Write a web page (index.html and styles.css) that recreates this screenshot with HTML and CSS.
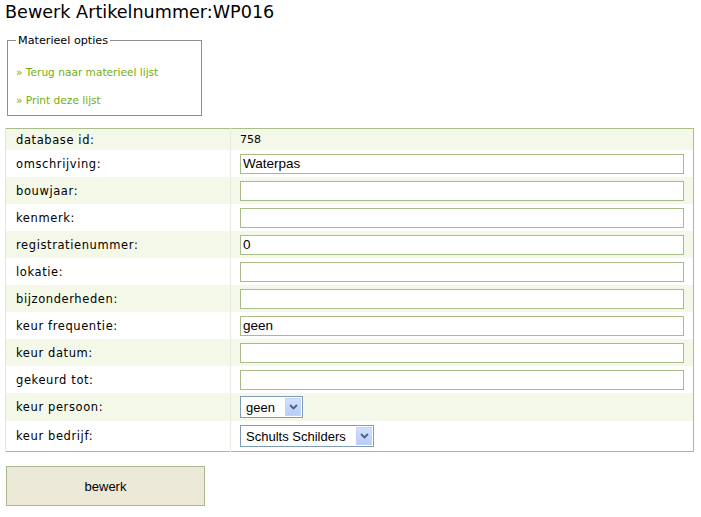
FILE: index.html
```html
<!DOCTYPE html>
<html lang="nl">
<head>
<meta charset="utf-8">
<title>Bewerk Artikelnummer:WP016</title>
<link rel="stylesheet" href="styles.css">
</head>
<body>
<h1 class="title">Bewerk Artikelnummer:WP016</h1>
<fieldset class="options">
  <legend>Materieel opties</legend>
  <p class="opt"><a href="#">» Terug naar materieel lijst</a></p>
  <p class="opt"><a href="#">» Print deze lijst</a></p>
</fieldset>
<form class="form">
<table class="grid">
  <tr class="alt short"><td class="lbl">database id:</td><td class="val">758</td></tr>
  <tr><td class="lbl">omschrijving:</td><td class="val"><input class="txt" type="text" value="Waterpas"></td></tr>
  <tr class="alt"><td class="lbl">bouwjaar:</td><td class="val"><input class="txt" type="text" value=""></td></tr>
  <tr><td class="lbl">kenmerk:</td><td class="val"><input class="txt" type="text" value=""></td></tr>
  <tr class="alt"><td class="lbl">registratienummer:</td><td class="val"><input class="txt" type="text" value="0"></td></tr>
  <tr><td class="lbl">lokatie:</td><td class="val"><input class="txt" type="text" value=""></td></tr>
  <tr class="alt"><td class="lbl">bijzonderheden:</td><td class="val"><input class="txt" type="text" value=""></td></tr>
  <tr><td class="lbl">keur frequentie:</td><td class="val"><input class="txt" type="text" value="geen"></td></tr>
  <tr class="alt"><td class="lbl">keur datum:</td><td class="val"><input class="txt" type="text" value=""></td></tr>
  <tr><td class="lbl">gekeurd tot:</td><td class="val"><input class="txt" type="text" value=""></td></tr>
  <tr class="alt sel-row"><td class="lbl">keur persoon:</td><td class="val"><span class="sel"><select><option>geen</option></select><span class="arrow"><svg width="9" height="6" viewBox="0 0 9 6"><path d="M1 1 L4.5 4.5 L8 1" fill="none" stroke="#4d6185" stroke-width="1.8"/></svg></span></span></td></tr>
  <tr class="sel-row last"><td class="lbl">keur bedrijf:</td><td class="val"><span class="sel"><select><option>Schults Schilders</option></select><span class="arrow"><svg width="9" height="6" viewBox="0 0 9 6"><path d="M1 1 L4.5 4.5 L8 1" fill="none" stroke="#4d6185" stroke-width="1.8"/></svg></span></span></td></tr>
</table>
<button class="submit" type="button">bewerk</button>
</form>
</body>
</html>
```
FILE: styles.css
```css
html, body {
  margin: 0;
  background: #fff;
}
body {
  padding: 0 5px;
  font-family: "DejaVu Sans", Verdana, sans-serif;
  font-size: 11px;
  color: #000;
}
.title {
  margin: 0;
  font-size: 17.6px;
  font-weight: normal;
  line-height: 24px;
}
.options {
  margin: 10px 0 0 2px;
  width: 195px;
  box-sizing: border-box;
  padding: 0 0 0 8px;
  border: 1px solid #8e8e8e;
}
.options legend {
  padding: 0 2px;
  margin-left: 0;
  font-size: 11.2px;
  line-height: 13px;
}
.opt {
  margin: 18px 0 0 0;
  line-height: 14px;
  font-size: 10.6px;
}
.opt + .opt {
  margin-top: 14px;
  margin-bottom: 8px;
}
.opt a {
  color: #74ad13;
  text-decoration: none;
}
.form {
  margin: 12px 0 0 0;
}
.grid {
  width: 689px;
  border-collapse: collapse;
  border: 1px solid #a9bd8a;
}
.grid td {
  padding: 0;
  height: 27px;
  vertical-align: middle;
}
.grid tr.alt td {
  background: #f3f8e9;
}
.grid tr.short td {
  height: 21px;
}
.grid tr.sel-row td {
  height: 28px;
}
.grid tr.last td {
  height: 30px;
}
.lbl {
  width: 225px;
  padding-left: 10px !important;
  border-left: 1px solid #e4e8dc;
  border-right: 1px solid #e6eadf;
  box-sizing: border-box;
  font-size: 11.5px;
  letter-spacing: 0.6px;
}
.val {
  padding-left: 9px !important;
  padding-right: 7px !important;
}
.txt {
  display: block;
  box-sizing: border-box;
  width: 444px;
  height: 20px;
  margin: 0;
  padding: 0 2px;
  border: 1px solid #a7bc86;
  background: #fff;
  font-family: "Liberation Sans", Arial, sans-serif;
  font-size: 13.5px;
  color: #000;
  outline: none;
}
.sel {
  position: relative;
  display: inline-block;
  vertical-align: middle;
}
.sel select {
  -webkit-appearance: none;
  appearance: none;
  box-sizing: border-box;
  height: 22px;
  margin: 0;
  padding: 0 27px 0 5px;
  border: 1px solid #7f9db9;
  border-radius: 0;
  background: #fff;
  font-family: "Liberation Sans", Arial, sans-serif;
  font-size: 13px;
  color: #000;
}
.sel .arrow {
  position: absolute;
  right: 2px;
  top: 2px;
  width: 16px;
  height: 18px;
  box-sizing: border-box;
  background: linear-gradient(#d2e0fd, #b8cdf6);
  border: 1px solid #c3d3fd;
  display: flex;
  align-items: center;
  justify-content: center;
  pointer-events: none;
}
.submit {
  display: block;
  margin: 14px 0 0 1px;
  width: 199px;
  height: 40px;
  background: #ece9d8;
  border: 1px solid #a9b98d;
  font-family: "Liberation Sans", Arial, sans-serif;
  font-size: 13px;
  color: #000;
  padding: 0;
}
```
